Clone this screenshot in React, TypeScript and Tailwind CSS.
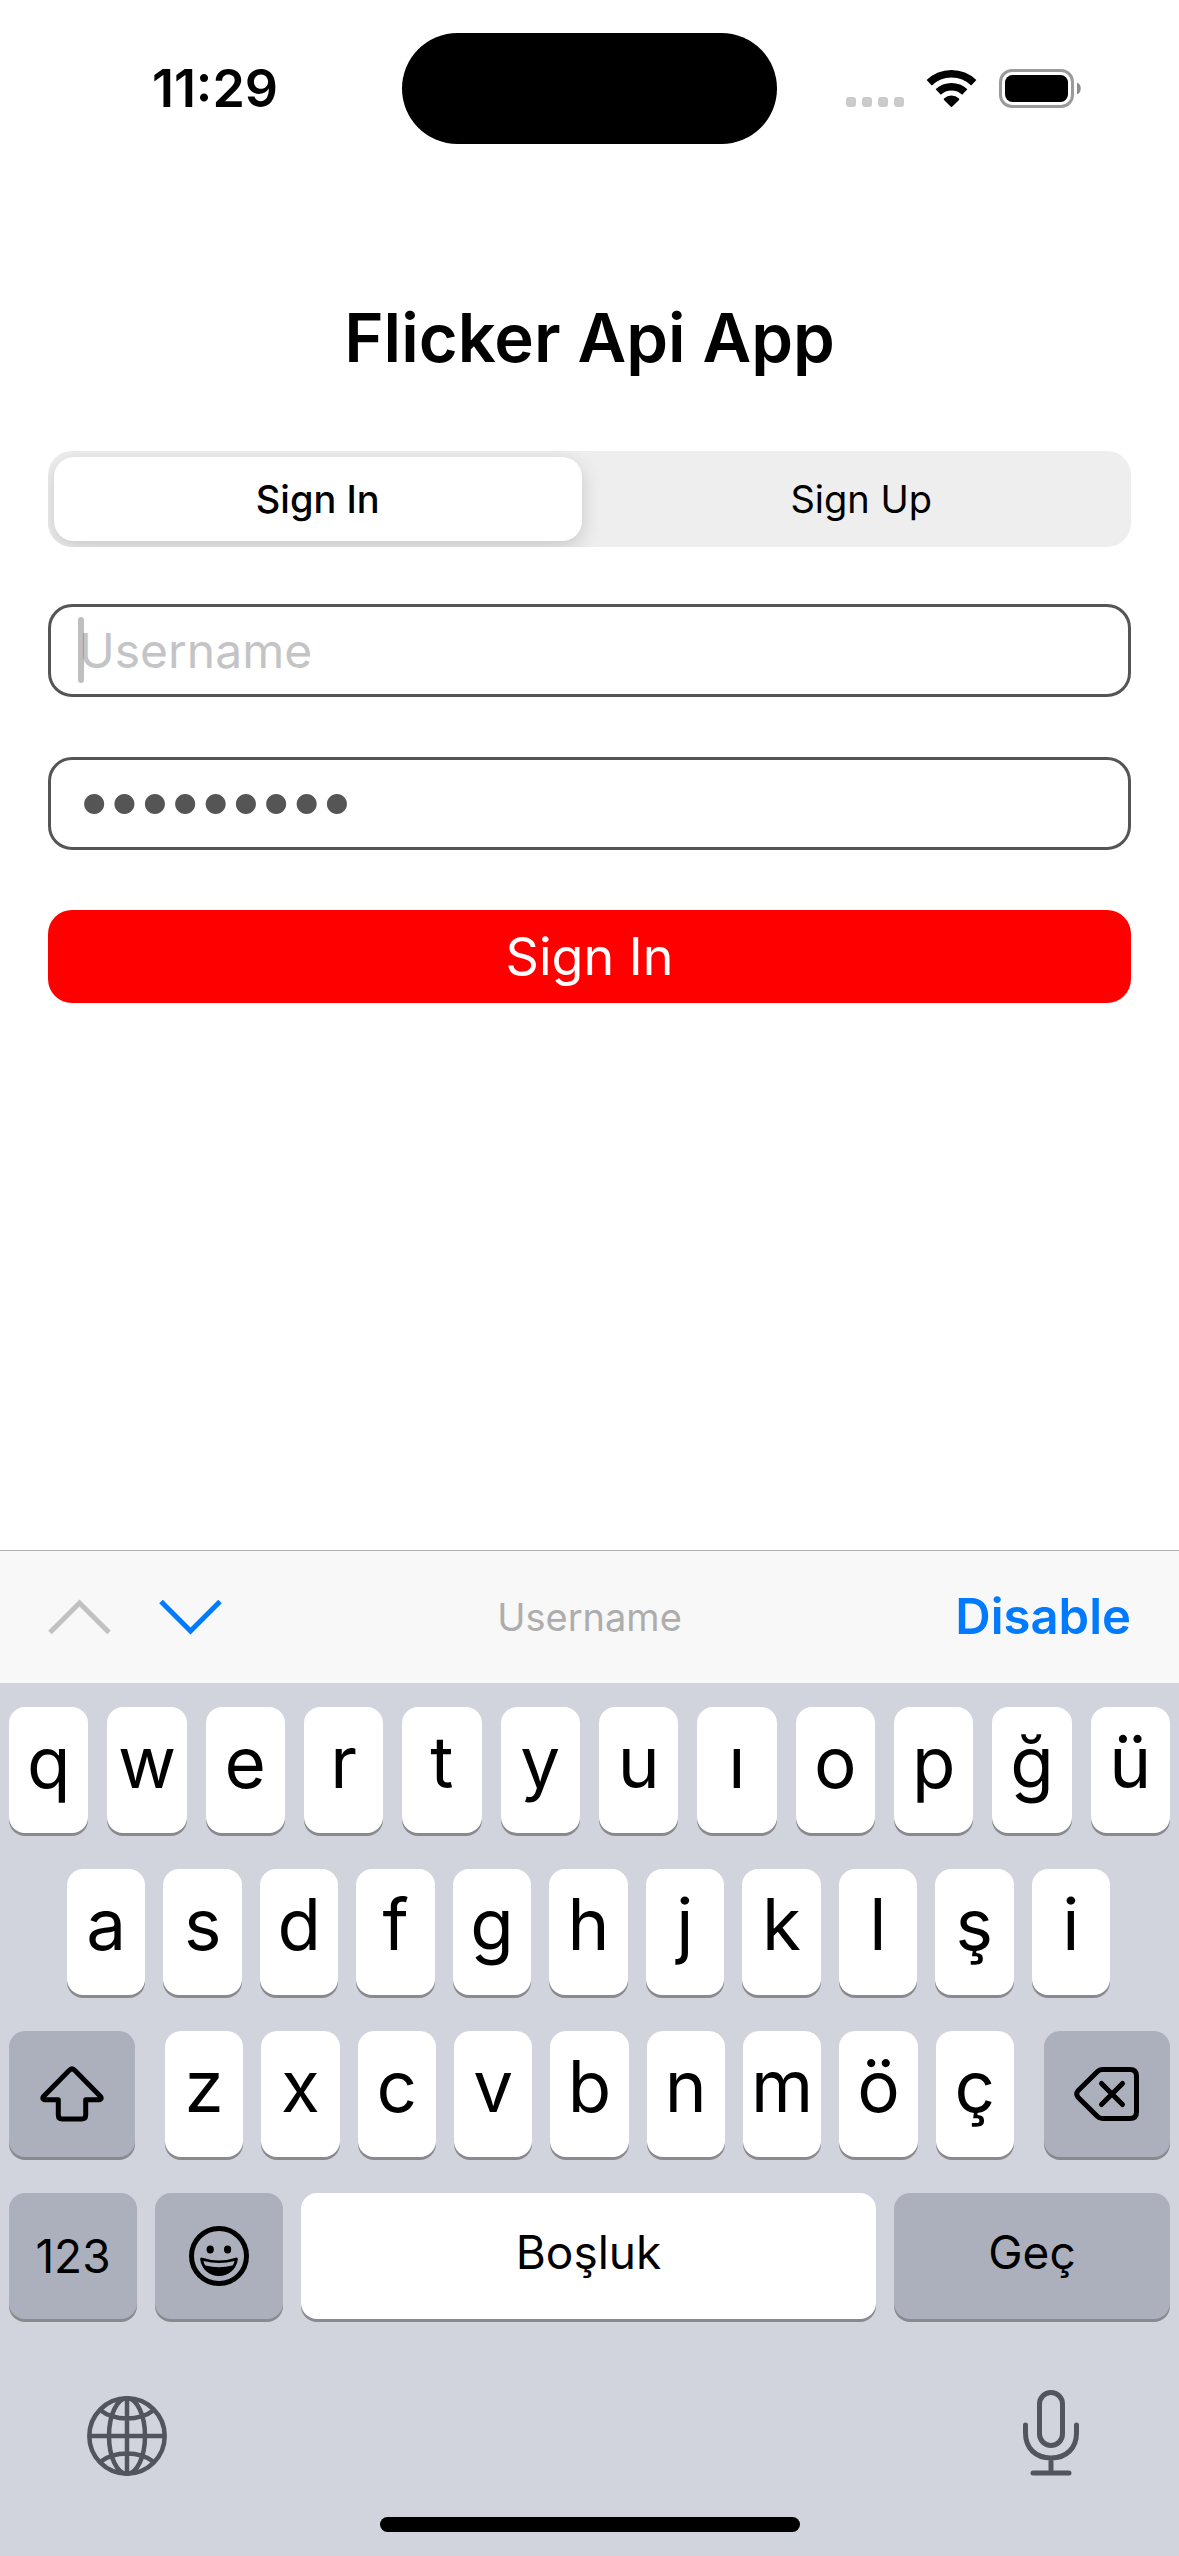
import { useState } from "react";
import type { ReactNode } from "react";

const ROW_1 = ["q", "w", "e", "r", "t", "y", "u", "ı", "o", "p", "ğ", "ü"];
const ROW_2 = ["a", "s", "d", "f", "g", "h", "j", "k", "l", "ş", "i"];
const ROW_3 = ["z", "x", "c", "v", "b", "n", "m", "ö", "ç"];

const KEY = "flex h-[126px] items-center justify-center rounded-2xl shadow-[0_3px_0_#898a8d]";

function StatusBar() {
  return (
    <header className="grid h-[177px] grid-cols-[1fr_375px_1fr] items-start pt-[33px]">
      <div className="flex h-[111px] items-center justify-center pl-7 text-[52px] font-semibold">11:29</div>
      <div className="h-[111px] rounded-full bg-black" />
      <div className="flex h-[111px] items-center justify-end pr-[97px]">
        <svg width="236" height="40" viewBox="0 0 236 40" role="img" aria-label="Wi-Fi connected, battery full">
          <g fill="#cbcbcb">
            <rect x="0" y="28" width="10" height="10" rx="3" />
            <rect x="16" y="28" width="10" height="10" rx="3" />
            <rect x="32" y="28" width="10" height="10" rx="3" />
            <rect x="48" y="28" width="10" height="10" rx="3" />
          </g>
          <g fill="none" stroke="#000" strokeWidth="7.5">
            <path d="M83.2 13.800a32 32 0 0 1 44.600 0" />
            <path d="M92.200 23a19.200 19.200 0 0 1 26.600 0" />
          </g>
          <path d="M98 29.400a11 11 0 0 1 15 0q.6.8 0 1.500l-6.600 6.600q-.9.8-1.800 0L98 30.900q-.6-.8 0-1.500z" />
          <rect x="154.500" y="1.500" width="72" height="36" rx="11.500" fill="none" stroke="#9a9a9a" strokeWidth="3" />
          <rect x="159" y="6" width="63" height="27" rx="7.500" />
          <path d="M231 13.500c5 1.500 5 10.500 0 12z" fill="#8c8c8c" />
        </svg>
      </div>
    </header>
  );
}

function LetterKey({ char }: { char: string }) {
  return (
    <button type="button" className={`${KEY} min-w-0 flex-1 bg-white pb-4 text-[71px]`}>
      {char}
    </button>
  );
}

function ActionKey({ label, className, children }: { label: string; className: string; children: ReactNode }) {
  return (
    <button type="button" aria-label={label} className={`${KEY} shrink-0 bg-[#abb0bc] text-[46px] ${className}`}>
      {children}
    </button>
  );
}

function ShiftIcon() {
  return (
    <svg width="64" height="56" viewBox="0 0 64 56" fill="none" stroke="#000" strokeWidth="5" strokeLinejoin="round">
      <path d="M29.800 3.800 3.500 30.500q-1.800 2.500 1 3.200H18.300V49q0 4 4 4H41.700q4 0 4-4V33.700H59.500q2.800-.7 1-3.200L34.200 3.800q-2.200-2-4.400 0z" />
    </svg>
  );
}

function BackspaceIcon() {
  return (
    <svg width="66" height="56" viewBox="0 0 66 56" fill="none" stroke="#000" strokeWidth="5" strokeLinecap="round" strokeLinejoin="round">
      <path d="M28.500 3.500H56q6.500 0 6.500 6.500V46q0 6.500-6.500 6.500H28.500q-3 0-5-2L4 31.200q-2.500-3.200 0-6.400L23.500 5.500q2-2 5-2z" />
      <path d="m27.500 17.500 21 21m0-21-21 21" />
    </svg>
  );
}

function EmojiIcon() {
  return (
    <svg width="60" height="60" viewBox="0 0 60 60">
      <circle cx="30" cy="30" r="27.500" fill="none" stroke="#000" strokeWidth="5" />
      <ellipse cx="21.200" cy="23.500" rx="3.600" ry="4" />
      <ellipse cx="38.600" cy="23.500" rx="3.600" ry="4" />
      <path fillRule="evenodd" d="M12.500 31.500q-1.500.2-1.300 2C12.500 43 20 50 30 50s17.500-7 18.800-16.500q.2-1.800-1.300-2Q30 37.500 12.500 31.500zM14.500 35q15.500 4 31 0-.5 3-2 4.500Q30 43 16.500 39.500q-1.500-1.500-2-4.500z" />
    </svg>
  );
}

function GlobeIcon() {
  return (
    <svg width="80" height="80" viewBox="0 0 80 80" fill="none" stroke="#51555e" strokeWidth="4.500">
      <circle cx="40" cy="40" r="37.700" />
      <ellipse cx="40" cy="40" rx="18" ry="37.700" />
      <path d="M40 2v76M2 40h76M13 14q11 8.500 27 8.500T67 14M13 66q11-8.500 27-8.500T67 66" />
    </svg>
  );
}

function MicIcon() {
  return (
    <svg width="56" height="86" viewBox="0 0 56 86" fill="none" stroke="#51555e" strokeWidth="5" strokeLinecap="round">
      <rect x="16.500" y="2.500" width="23" height="53" rx="11.500" />
      <path d="M2.500 35v8c0 15 10 25 25.500 25s25.500-10 25.500-25v-8M28 68v15M10 83h36" />
    </svg>
  );
}

function AuthForm() {
  const [tab, setTab] = useState("Sign In");
  const [username, setUsername] = useState("");
  const [password, setPassword] = useState("password1");
  return (
    <main className="px-12 pt-[113px]">
      <h1 className="text-center text-[67px] leading-[96px] font-semibold">Flicker Api App</h1>
      <div role="tablist" className="mt-[65px] flex h-24 gap-4 overflow-hidden rounded-3xl bg-[#eee] p-[6px]">
        {["Sign In", "Sign Up"].map((name) => (
          <button
            key={name}
            type="button"
            role="tab"
            aria-selected={tab === name}
            onClick={() => setTab(name)}
            className={
              tab === name
                ? "flex-1 rounded-[20px] bg-white text-[38px] font-medium shadow-[0_6px_20px_rgba(0,0,0,0.16)]"
                : "flex-1 text-[38px]"
            }
          >
            {name}
          </button>
        ))}
      </div>
      <form onSubmit={(event) => event.preventDefault()}>
        <div className="relative mt-[57px]">
          <input
            aria-label="Username"
            placeholder="Username"
            value={username}
            onChange={(event) => setUsername(event.target.value)}
            className="block h-[93px] w-full rounded-3xl border-[3px] border-[#555] px-7 text-[48px] text-[#555] outline-none placeholder:text-[#c4c4c6]"
          />
          <span className="absolute top-[13px] left-[30px] h-[66px] w-[6px] rounded-sm bg-black/25" />
        </div>
        <input
          type="password"
          aria-label="Password"
          value={password}
          onChange={(event) => setPassword(event.target.value)}
          className="mt-[60px] block h-[93px] w-full rounded-3xl border-[3px] border-[#555] px-7 pb-2 text-[64px] font-bold text-[#555] outline-none"
        />
        <button type="submit" className="mt-[60px] block h-[93px] w-full rounded-3xl bg-[#f00] text-[52px] text-white">
          Sign In
        </button>
      </form>
    </main>
  );
}

function Keyboard() {
  return (
    <section aria-label="Keyboard" className="bg-[#d1d4dd]">
      <div className="grid h-[133px] grid-cols-3 items-center border-t border-[#b2b2b2] bg-[#f8f8f8] px-12">
        <div className="flex gap-12">
          <button type="button" aria-label="Previous field">
            <svg width="63" height="36" viewBox="0 0 63 36" fill="none" stroke="#c1c1c1" strokeWidth="5">
              <path d="M2 33.500 31.500 4 61 33.500" />
            </svg>
          </button>
          <button type="button" aria-label="Next field">
            <svg width="63" height="36" viewBox="0 0 63 36" fill="none" stroke="#007aff" strokeWidth="5">
              <path d="M2 2.500 31.500 32 61 2.500" />
            </svg>
          </button>
        </div>
        <p className="text-center text-[38px] text-[#adadad]">Username</p>
        <button type="button" className="justify-self-end text-[49px] font-semibold text-[#007aff]">
          Disable
        </button>
      </div>
      <div className="flex flex-col gap-9 px-[9px] pt-6">
        <div className="flex gap-[19px]">
          {ROW_1.map((char) => (
            <LetterKey key={char} char={char} />
          ))}
        </div>
        <div className="flex gap-[18px] pr-[60px] pl-[58px]">
          {ROW_2.map((char) => (
            <LetterKey key={char} char={char} />
          ))}
        </div>
        <div className="flex gap-[30px]">
          <ActionKey label="Shift" className="w-[126px]">
            <ShiftIcon />
          </ActionKey>
          <div className="flex flex-1 gap-[18px]">
            {ROW_3.map((char) => (
              <LetterKey key={char} char={char} />
            ))}
          </div>
          <ActionKey label="Delete" className="w-[126px]">
            <BackspaceIcon />
          </ActionKey>
        </div>
        <div className="flex gap-[18px]">
          <ActionKey label="123" className="w-32">
            123
          </ActionKey>
          <ActionKey label="Emoji" className="w-32">
            <EmojiIcon />
          </ActionKey>
          <button type="button" className={`${KEY} flex-1 bg-white pb-2 text-[46px]`}>
            Boşluk
          </button>
          <ActionKey label="Geç" className="w-[276px] pb-2">
            Geç
          </ActionKey>
        </div>
      </div>
      <div className="flex items-end justify-between px-[87px] pt-[71px]">
        <button type="button" aria-label="Change keyboard language">
          <GlobeIcon />
        </button>
        <button type="button" aria-label="Dictate" className="mr-[13px]">
          <MicIcon />
        </button>
      </div>
      <div className="mx-auto mt-[41px] h-[15px] w-[420px] rounded-full bg-black" />
      <div className="h-6" />
    </section>
  );
}

export default function App() {
  return (
    <div className="flex min-h-screen flex-col justify-between bg-white font-[Inter,sans-serif] text-black">
      <div>
        <StatusBar />
        <AuthForm />
      </div>
      <Keyboard />
    </div>
  );
}
